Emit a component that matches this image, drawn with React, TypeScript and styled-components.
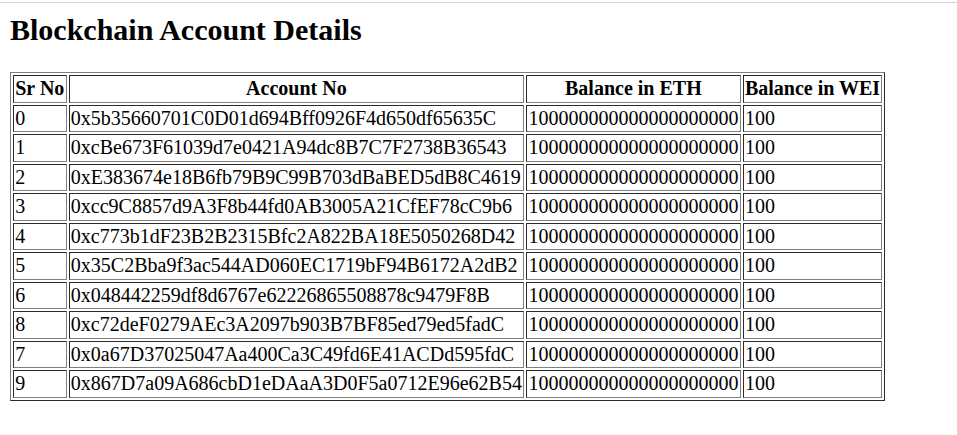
import React from "react";
import styled, { createGlobalStyle } from "styled-components";

const GlobalStyle = createGlobalStyle`
  html, body {
    margin: 0;
    padding: 0;
    background: #ffffff;
  }
  body {
    font-family: "Liberation Serif", "Times New Roman", serif;
    color: #000000;
  }
`;

const TopRule = styled.div`
  margin-top: 2px;
  height: 1px;
  background: #d3d3d3;
  width: 100%;
`;

const Page = styled.div`
  padding: 0 10px;
  display: flow-root;
`;

const Title = styled.h2`
  font-family: "Liberation Serif", "Times New Roman", serif;
  font-size: 30px;
  font-weight: bold;
  line-height: 34.5px;
  margin: 9.5px 0 25px 0;
`;

const Table = styled.table`
  border: 1px outset grey;
  border-spacing: 2px;
  border-collapse: separate;
  font-size: 20px;
  line-height: 23.5px;
`;

const HeadCell = styled.th`
  border: 1px inset grey;
  padding: 1px 1.25px;
  font-weight: bold;
  text-align: center;
  white-space: nowrap;
`;

const Cell = styled.td`
  border: 1px inset grey;
  padding: 1px 1.25px;
  text-align: left;
  white-space: nowrap;
`;

const rows: [string, string][] = [
  ["0", "0x5b35660701C0D01d694Bff0926F4d650df65635C"],
  ["1", "0xcBe673F61039d7e0421A94dc8B7C7F2738B36543"],
  ["2", "0xE383674e18B6fb79B9C99B703dBaBED5dB8C4619"],
  ["3", "0xcc9C8857d9A3F8b44fd0AB3005A21CfEF78cC9b6"],
  ["4", "0xc773b1dF23B2B2315Bfc2A822BA18E5050268D42"],
  ["5", "0x35C2Bba9f3ac544AD060EC1719bF94B6172A2dB2"],
  ["6", "0x048442259df8d6767e62226865508878c9479F8B"],
  ["8", "0xc72deF0279AEc3A2097b903B7BF85ed79ed5fadC"],
  ["7", "0x0a67D37025047Aa400Ca3C49fd6E41ACDd595fdC"],
  ["9", "0x867D7a09A686cbD1eDAaA3D0F5a0712E96e62B54"],
];

export default function App() {
  return (
    <>
      <GlobalStyle />
      <TopRule />
      <Page>
        <Title>Blockchain Account Details</Title>
        <Table>
          <thead>
            <tr>
              <HeadCell>Sr No</HeadCell>
              <HeadCell>Account No</HeadCell>
              <HeadCell>Balance in ETH</HeadCell>
              <HeadCell>Balance in WEI</HeadCell>
            </tr>
          </thead>
          <tbody>
            {rows.map(([sr, acct]) => (
              <tr key={acct}>
                <Cell>{sr}</Cell>
                <Cell>{acct}</Cell>
                <Cell>100000000000000000000</Cell>
                <Cell>100</Cell>
              </tr>
            ))}
          </tbody>
        </Table>
      </Page>
    </>
  );
}
